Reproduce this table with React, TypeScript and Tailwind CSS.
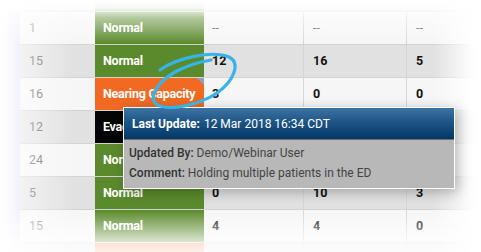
import React from "react";

type Row = {
  num: string;
  status: string;
  kind: "green" | "orange" | "black";
  a: string;
  b: string;
  c: string;
  note?: boolean;
};

const rows: Row[] = [
  { num: "", status: "Normal", kind: "green", a: "", b: "", c: "" },
  { num: "1", status: "Normal", kind: "green", a: "--", b: "--", c: "--" },
  { num: "15", status: "Normal", kind: "green", a: "12", b: "16", c: "5" },
  { num: "16", status: "Nearing Capacity", kind: "orange", a: "3", b: "0", c: "0", note: true },
  { num: "12", status: "Evacuating", kind: "black", a: "2", b: "1", c: "0" },
  { num: "24", status: "Normal", kind: "green", a: "6", b: "8", c: "2" },
  { num: "5", status: "Normal", kind: "green", a: "0", b: "10", c: "3" },
  { num: "15", status: "Normal", kind: "green", a: "4", b: "4", c: "0" },
  { num: "9", status: "Nearing Capacity", kind: "orange", a: "1", b: "2", c: "1" },
];

const statusBg: Record<Row["kind"], string> = {
  green: "bg-[#5b8a2c]",
  orange: "bg-[#f26a22]",
  black: "bg-[#050505]",
};

function Val({ v }: { v: string }) {
  if (v === "--") return <span className="font-normal text-[#555]">--</span>;
  return <span className="font-bold text-[#111]">{v}</span>;
}

export default function App() {
  return (
    <div className="relative w-[481px] h-[252px] overflow-hidden bg-white font-['Roboto',sans-serif] text-[12.5px]">
      <div className="ml-[20px] mr-[4px] -mt-[21px] shadow-[-5px_0_16px_rgba(120,120,220,0.14)]">
        {rows.map((r, i) => (
          <div
            key={i}
            className={`grid grid-cols-[75px_109px_100px_103px_1fr] h-[33px] border-b border-[#d3d3d3] ${
              i % 2 === 0 ? "bg-[#e1e1e1]" : "bg-[#f6f6f6]"
            }`}
          >
            <div className="flex items-center pl-[9px] text-[#5e5e5e]">{r.num}</div>
            <div
              className={`relative flex items-center pl-[8px] font-bold tracking-[-0.25px] text-white whitespace-nowrap ${statusBg[r.kind]}`}
            >
              {r.status}
              {r.note && (
                <div className="absolute top-0 right-0 w-0 h-0 border-t-[7px] border-l-[7px] border-t-[#86a3c4] border-l-transparent" />
              )}
            </div>
            <div className="flex items-center pl-[8px] border-r border-[#d6d6d6]">
              <Val v={r.a} />
            </div>
            <div className="flex items-center pl-[9px] border-r border-[#d6d6d6]">
              <Val v={r.b} />
            </div>
            <div className="flex items-center pl-[9px]">
              <Val v={r.c} />
            </div>
          </div>
        ))}
      </div>

      {/* edge fades */}
      <div className="absolute left-0 top-0 w-full h-[44px] bg-[linear-gradient(to_bottom,#ffffff_0%,rgba(255,255,255,0.95)_18%,rgba(255,255,255,0.55)_40%,rgba(255,255,255,0)_100%)]" />
      <div className="absolute left-0 bottom-0 w-full h-[42px] bg-[linear-gradient(to_bottom,rgba(255,255,255,0)_0%,rgba(255,255,255,0.8)_78%,rgba(255,255,255,0.9)_100%)]" />
      <div className="absolute left-[20px] top-0 h-full w-[55px] bg-[linear-gradient(to_right,rgba(255,255,255,0.6)_0%,rgba(255,255,255,0)_100%)]" />
      <div className="absolute right-0 top-0 h-full w-[48px] bg-[linear-gradient(to_right,rgba(255,255,255,0)_0%,rgba(255,255,255,0.95)_80%,#ffffff_100%)]" />

      {/* tooltip */}
      <div className="absolute left-[123px] top-[107px] w-[332px] border border-white text-[12px] shadow-[3px_3px_12px_rgba(0,0,0,0.28)]">
        <div className="h-[32px] flex items-center pl-[8px] text-white bg-[linear-gradient(to_bottom,#3d74a4_0%,#1d5586_45%,#013865_100%)] border-b border-[#6f6f6f]">
          <span className="font-bold">Last Update:</span>
          <span className="ml-[4px]">12 Mar 2018 16:34 CDT</span>
        </div>
        <div className="bg-[#b8b8b8] pl-[5px] pt-[3px] pb-[5px] text-[#444] leading-[20px]">
          <div>
            <span className="font-medium text-[#333]">Updated By:</span> Demo/Webinar User
          </div>
          <div>
            <span className="font-medium text-[#333]">Comment:</span> Holding multiple patients in the ED
          </div>
        </div>
      </div>

      {/* hand-drawn circle */}
      <svg className="absolute left-0 top-0" width="481" height="252" viewBox="0 0 481 252">
        <path
          d="M160 70 C 176 58, 212 50, 229 57 C 241 63, 234 81, 217 93 C 199 105, 168 112, 156 104 C 148 97, 158 82, 175 72 C 186 66, 199 62, 211 60"
          fill="none"
          stroke="#36b4e8"
          strokeWidth="3.2"
          strokeLinecap="round"
        />
      </svg>
    </div>
  );
}
